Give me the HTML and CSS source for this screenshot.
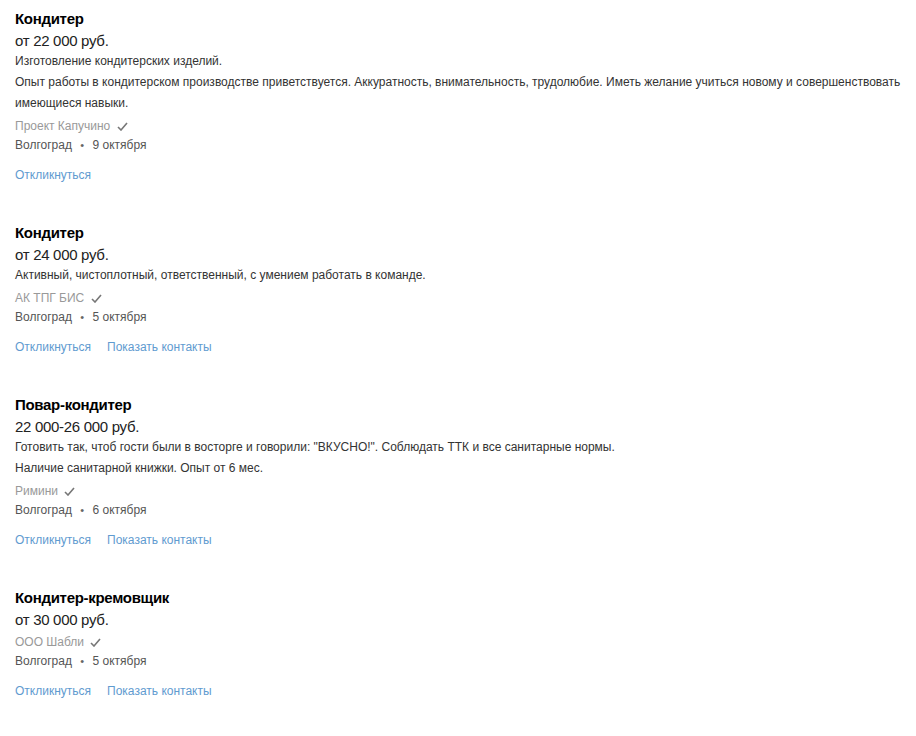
FILE: index.html
```html
<!DOCTYPE html>
<html>
<head>
    <meta charset="utf-8">
    <title>Вакансии</title>
    <link rel="stylesheet" href="styles.css">
</head>
<body>

<div class="vacancy-list">

    <div class="vacancy">
        <div class="vacancy-title">Кондитер</div>
        <div class="vacancy-salary">от 22 000 руб.</div>
        <div class="vacancy-desc">
            <p>Изготовление кондитерских изделий.</p>
            <p>Опыт работы в кондитерском производстве приветствуется. Аккуратность, внимательность, трудолюбие. Иметь желание учиться новому и совершенствовать имеющиеся навыки.</p>
        </div>
        <div class="vacancy-company">Проект Капучино
            <svg class="check" width="11" height="9" viewBox="0 0 11 9"><path d="M1 5 L4 8 L10 1" fill="none" stroke="#777" stroke-width="1.6"/></svg>
        </div>
        <div class="vacancy-meta">Волгоград <span class="dot">&bull;</span> 9 октября</div>
        <div class="vacancy-actions">
            <a href="#">Откликнуться</a>
        </div>
    </div>

    <div class="vacancy">
        <div class="vacancy-title">Кондитер</div>
        <div class="vacancy-salary">от 24 000 руб.</div>
        <div class="vacancy-desc">
            <p>Активный, чистоплотный, ответственный, с умением работать в команде.</p>
        </div>
        <div class="vacancy-company">АК ТПГ БИС
            <svg class="check" width="11" height="9" viewBox="0 0 11 9"><path d="M1 5 L4 8 L10 1" fill="none" stroke="#777" stroke-width="1.6"/></svg>
        </div>
        <div class="vacancy-meta">Волгоград <span class="dot">&bull;</span> 5 октября</div>
        <div class="vacancy-actions">
            <a href="#">Откликнуться</a>
            <a href="#">Показать контакты</a>
        </div>
    </div>

    <div class="vacancy">
        <div class="vacancy-title">Повар-кондитер</div>
        <div class="vacancy-salary">22 000-26 000 руб.</div>
        <div class="vacancy-desc">
            <p>Готовить так, чтоб гости были в восторге и говорили: "ВКУСНО!". Соблюдать ТТК и все санитарные нормы.</p>
            <p>Наличие санитарной книжки. Опыт от 6 мес.</p>
        </div>
        <div class="vacancy-company">Римини
            <svg class="check" width="11" height="9" viewBox="0 0 11 9"><path d="M1 5 L4 8 L10 1" fill="none" stroke="#777" stroke-width="1.6"/></svg>
        </div>
        <div class="vacancy-meta">Волгоград <span class="dot">&bull;</span> 6 октября</div>
        <div class="vacancy-actions">
            <a href="#">Откликнуться</a>
            <a href="#">Показать контакты</a>
        </div>
    </div>

    <div class="vacancy">
        <div class="vacancy-title">Кондитер-кремовщик</div>
        <div class="vacancy-salary">от 30 000 руб.</div>
        <div class="vacancy-company">ООО Шабли
            <svg class="check" width="11" height="9" viewBox="0 0 11 9"><path d="M1 5 L4 8 L10 1" fill="none" stroke="#777" stroke-width="1.6"/></svg>
        </div>
        <div class="vacancy-meta">Волгоград <span class="dot">&bull;</span> 5 октября</div>
        <div class="vacancy-actions">
            <a href="#">Откликнуться</a>
            <a href="#">Показать контакты</a>
        </div>
    </div>

</div>

</body>
</html>
```

FILE: styles.css
```css
body {
    margin: 0;
    background-color: #fff;
    font-family: "Liberation Sans", Arial, sans-serif;
    color: #333;
}

.vacancy-list {
    padding: 8px 15px 0 15px;
}

.vacancy {
    margin-bottom: 37px;
}

.vacancy-title {
    font-size: 15px;
    font-weight: bold;
    line-height: 21px;
    letter-spacing: -0.3px;
    color: #000;
}

.vacancy-salary {
    margin-top: 2px;
    font-size: 15px;
    line-height: 20px;
    letter-spacing: -0.3px;
    color: #222;
}

.vacancy-desc {
    font-size: 12px;
    line-height: 21px;
    color: #333;
}

.vacancy-desc p {
    margin: 0;
}

.vacancy-company {
    margin-top: 3px;
    font-size: 12px;
    line-height: 19px;
    color: #999;
}

.check {
    margin-left: 3px;
    vertical-align: -1px;
}

.vacancy-meta {
    font-size: 12px;
    line-height: 19px;
    color: #555;
}

.dot {
    margin: 0 5px;
    font-size: 11px;
    color: #666;
}

.vacancy-actions {
    margin-top: 11px;
    display: flex;
    gap: 16px;
    font-size: 12px;
    line-height: 19px;
}

.vacancy-actions a {
    color: #5f9bd0;
    text-decoration: none;
}
```
